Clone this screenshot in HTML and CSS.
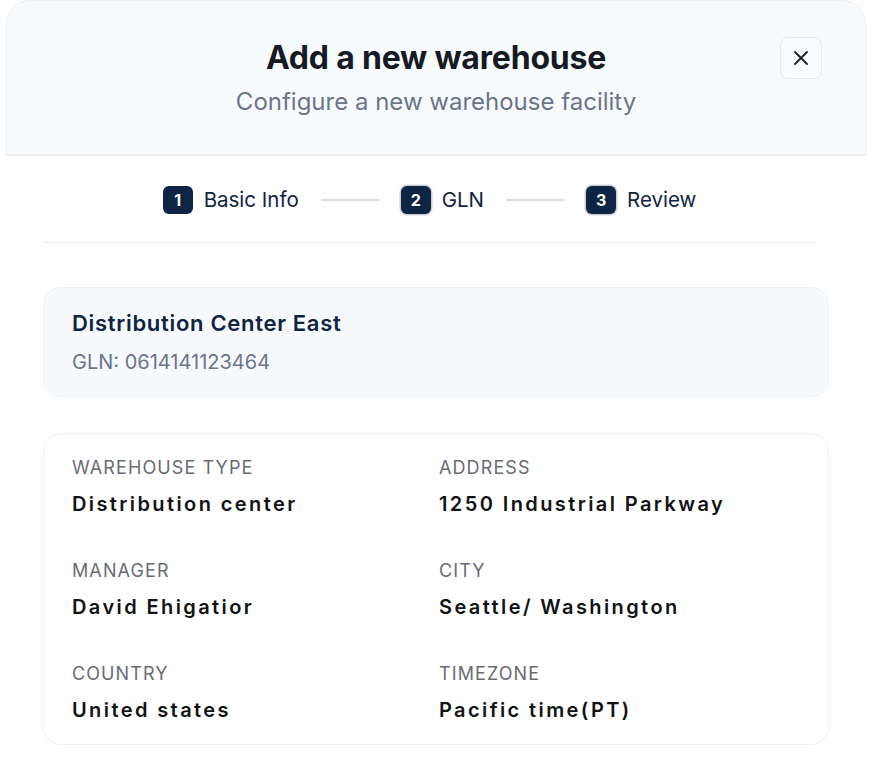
FILE: index.html
```html
<!DOCTYPE html>
<html lang="en">
<head>
<meta charset="utf-8">
<title>Add a new warehouse</title>
<link rel="stylesheet" href="styles.css">
</head>
<body>
<div class="modal">
  <header class="modal-header">
    <h1 class="title">Add a new warehouse</h1>
    <p class="subtitle">Configure a new warehouse facility</p>
    <button class="close" aria-label="Close">
      <svg width="18" height="18" viewBox="0 0 18 18" fill="none" stroke="#1b1f26" stroke-width="1.8" stroke-linecap="round"><path d="M3 3L15 15M15 3L3 15"/></svg>
    </button>
  </header>
  <div class="modal-body">
    <div class="steps-wrap">
      <nav class="stepper">
        <div class="step"><span class="badge">1</span><span class="step-label">Basic Info</span></div>
        <span class="connector"></span>
        <div class="step"><span class="badge ring">2</span><span class="step-label">GLN</span></div>
        <span class="connector"></span>
        <div class="step"><span class="badge ring">3</span><span class="step-label">Review</span></div>
      </nav>
      <div class="divider"></div>
    </div>
    <section class="summary">
      <h2 class="summary-name">Distribution Center East</h2>
      <p class="summary-gln">GLN: 0614141123464</p>
    </section>
    <section class="details">
      <div class="field"><div class="label">Warehouse type</div><div class="value">Distribution center</div></div>
      <div class="field"><div class="label">Address</div><div class="value">1250 Industrial Parkway</div></div>
      <div class="field"><div class="label">Manager</div><div class="value">David Ehigatior</div></div>
      <div class="field"><div class="label">City</div><div class="value">Seattle/ Washington</div></div>
      <div class="field"><div class="label">Country</div><div class="value">United states</div></div>
      <div class="field"><div class="label">Timezone</div><div class="value">Pacific time(PT)</div></div>
    </section>
  </div>
</div>
</body>
</html>
```
FILE: styles.css
```css
* { box-sizing: border-box; }
html, body { margin: 0; padding: 0; background: #ffffff; }
body { font-family: Inter, "Noto Sans", sans-serif; color: #0f2342; }

.modal {
  width: 860px;
  margin-left: 6px;
  background: #ffffff;
}

.modal-header {
  position: relative;
  background: #f7fbfe;
  border: 1px solid #eef1f4;
  border-bottom: 2px solid #eef0f2;
  border-radius: 24px 24px 0 0;
  padding: 39px 0 38px;
  text-align: center;
}
.title {
  margin: 0;
  font-size: 32px;
  line-height: 36px;
  font-weight: 700;
  color: #151a23;
  letter-spacing: -0.2px;
}
.subtitle {
  margin: 12px 0 0;
  font-size: 24px;
  line-height: 28px;
  color: #6b7489;
  font-weight: 400;
}
.close {
  position: absolute;
  top: 36px;
  right: 43px;
  width: 42px;
  height: 42px;
  border: 1.5px solid #e7eaee;
  border-radius: 8px;
  background: #fafcfe;
  display: flex;
  align-items: center;
  justify-content: center;
  padding: 0;
}

.modal-body {
  padding: 30px 37px 40px;
}

.steps-wrap {
  margin-right: 13px;
}
.stepper {
  display: flex;
  align-items: center;
  justify-content: center;
  gap: 22px;
}
.step {
  display: flex;
  align-items: center;
  gap: 11px;
}
.badge {
  width: 30px;
  height: 28px;
  border-radius: 6px;
  background: #0f2342;
  color: #ffffff;
  font-size: 16px;
  font-weight: 700;
  display: flex;
  align-items: center;
  justify-content: center;
}
.badge.ring { box-shadow: 0 0 0 1.5px #c9ced8; }
.step-label {
  font-size: 20.5px;
  line-height: 28px;
  color: #0f2342;
}
.connector {
  width: 58px;
  height: 2px;
  background: #d9dadc;
}

.divider {
  height: 1px;
  background: #eeeff1;
  margin-top: 28px;
}

.summary {
  margin-top: 44px;
  background: #f6fafd;
  border: 1px solid #edf1f5;
  border-radius: 18px;
  padding: 21px 28px 21px;
}
.summary-name {
  margin: 0;
  font-size: 22px;
  line-height: 28px;
  font-weight: 600;
  color: #0f2342;
  letter-spacing: 0.7px;
}
.summary-gln {
  margin: 12px 0 0;
  font-size: 20px;
  line-height: 26px;
  color: #6b7489;
}

.details {
  margin-top: 36px;
  border: 1.5px solid #eef0f2;
  border-radius: 18px;
  padding: 23px 28px 21px;
  display: grid;
  grid-template-columns: 367px 1fr;
  row-gap: 43px;
}
.label {
  font-size: 18px;
  line-height: 22px;
  color: #6a6b73;
  text-transform: uppercase;
  letter-spacing: 1.1px;
}
.value {
  margin-top: 12px;
  font-size: 20px;
  line-height: 26px;
  font-weight: 600;
  color: #111214;
  letter-spacing: 2.4px;
}
```
